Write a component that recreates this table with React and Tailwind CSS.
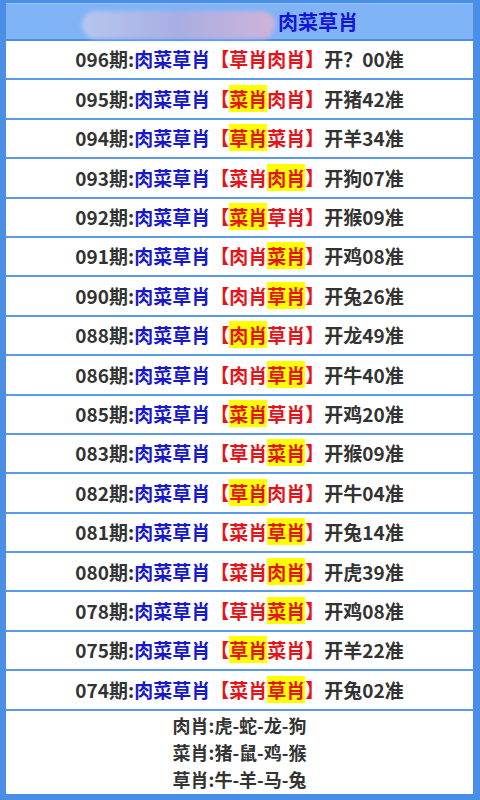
const rows = [
  ["096", "草肖", "肉肖", 0, "开？00准"],
  ["095", "菜肖", "肉肖", 1, "开猪42准"],
  ["094", "草肖", "菜肖", 1, "开羊34准"],
  ["093", "菜肖", "肉肖", 2, "开狗07准"],
  ["092", "菜肖", "草肖", 1, "开猴09准"],
  ["091", "肉肖", "菜肖", 2, "开鸡08准"],
  ["090", "肉肖", "草肖", 2, "开兔26准"],
  ["088", "肉肖", "草肖", 1, "开龙49准"],
  ["086", "肉肖", "草肖", 2, "开牛40准"],
  ["085", "菜肖", "草肖", 1, "开鸡20准"],
  ["083", "草肖", "菜肖", 2, "开猴09准"],
  ["082", "草肖", "肉肖", 1, "开牛04准"],
  ["081", "菜肖", "草肖", 2, "开兔14准"],
  ["080", "菜肖", "肉肖", 2, "开虎39准"],
  ["078", "草肖", "菜肖", 2, "开鸡08准"],
  ["075", "草肖", "菜肖", 1, "开羊22准"],
  ["074", "菜肖", "草肖", 2, "开兔02准"],
];

function Pick({ text, on }) {
  return on ? <span className="bg-[#ffff00]">{text}</span> : <span>{text}</span>;
}

export default function App() {
  return (
    <div
      className="w-[480px] h-[800px] bg-[#4a8fe7] pt-[3px] pl-[6px] pr-[7px] pb-[6px] flex flex-col font-bold"
      style={{ fontFamily: '"Noto Sans CJK SC", "Noto Sans", sans-serif' }}
    >
      <div className="h-[36px] bg-[#80b4f7] border-t border-[#9cc6fa] flex items-center pl-[76px]">
        <div className="w-[193px] h-[28px] mt-[6px] rounded-full bg-gradient-to-r from-[#b6c6ef] via-[#a9aee2] to-[#cfb3d9] blur-[2px]" />
        <span className="ml-[3px] text-[20px] leading-none text-[#1515d2]">肉菜草肖</span>
      </div>
      <div className="h-[2px] bg-[#4a8fe7]" />
      {rows.map(([num, a, b, hl, tail]) => (
        <div
          key={num}
          className="h-[39.4px] bg-white border-b-2 border-[#5b9ae8] flex items-center justify-center text-[19px] text-[#333333] whitespace-nowrap"
        >
          <span>{num}期:</span>
          <span className="text-[#1818cc]">肉菜草肖</span>
          <span className="text-[#e5141b]">
            【<Pick text={a} on={hl === 1} />
            <Pick text={b} on={hl === 2} />】
          </span>
          <span>{tail}</span>
        </div>
      ))}
      <div className="flex-1 bg-white flex flex-col items-center justify-center text-[18px] leading-[27px] text-[#333333]">
        <div>肉肖:虎-蛇-龙-狗</div>
        <div>菜肖:猪-鼠-鸡-猴</div>
        <div>草肖:牛-羊-马-兔</div>
      </div>
    </div>
  );
}
